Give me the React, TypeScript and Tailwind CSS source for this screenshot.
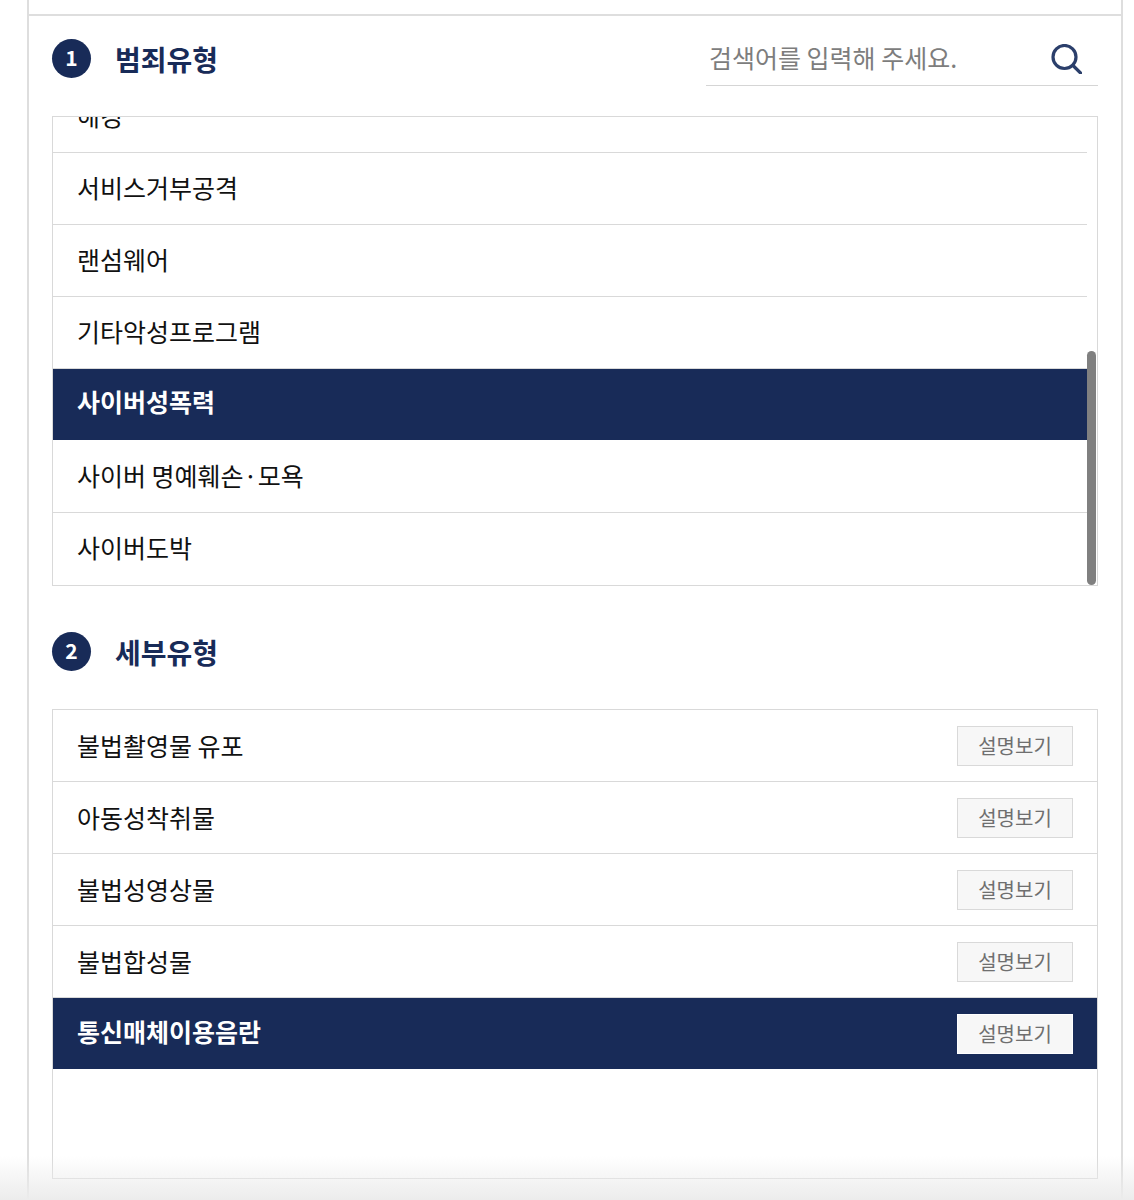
const crimeTypes = [
  { name: "해킹" },
  { name: "서비스거부공격" },
  { name: "랜섬웨어" },
  { name: "기타악성프로그램" },
  { name: "사이버성폭력", active: true },
  { name: "사이버 명예훼손·모욕" },
  { name: "사이버도박" },
];

const detailTypes = [
  { name: "불법촬영물 유포" },
  { name: "아동성착취물" },
  { name: "불법성영상물" },
  { name: "불법합성물" },
  { name: "통신매체이용음란", active: true },
];

function SectionTitle({ num, title }: { num: number; title: string }) {
  return (
    <div className="flex items-center gap-6">
      <span className="flex h-[39px] w-[39px] items-center justify-center rounded-full bg-[#182b58] pb-[3px] text-[21px] font-bold leading-none text-white">
        {num}
      </span>
      <h2 className="text-[28px] font-bold leading-none text-[#182b58]">{title}</h2>
    </div>
  );
}

export default function App() {
  return (
    <div
      className="relative h-[1200px] w-[1134px] overflow-hidden bg-white text-[25px] text-[#111]"
      style={{ fontFamily: '"Noto Sans CJK KR", "Noto Sans", sans-serif' }}
    >
      <div className="ml-[27px] h-[1200px] w-[1096px] border-x-2 border-[#dedede]">
        <div className="h-[16px] border-b-2 border-[#dedede]" />
        <div className="px-[23px]">
          {/* 범죄유형 */}
          <div className="flex h-[100px] items-start justify-between pt-[23px]">
            <SectionTitle num={1} title="범죄유형" />
            <div className="flex h-[47px] w-[392px] items-center justify-between border-b border-[#d5d5d5] pb-[8px] pl-[3px] pr-[16px]">
              <span className="text-[25px] text-[#7d7d7d]">검색어를 입력해 주세요.</span>
              <svg className="mt-[1px] h-[30px] w-[31px]" viewBox="0 0 31 30" fill="none" stroke="#2b3f6b" strokeWidth="3.2">
                <circle cx="13.5" cy="13" r="11.5" />
                <path d="M22 21.5L29.5 29" strokeLinecap="round" />
              </svg>
            </div>
          </div>

          <div className="relative h-[470px] w-[1046px] overflow-hidden border border-[#d9d9d9]">
            <div className="-mt-[36px] mr-[10px]">
              {crimeTypes.map((row) => (
                <div
                  key={row.name}
                  className={`flex h-[72px] items-center px-6 ${
                    row.active
                      ? "border-b border-white bg-[#182b58] pb-[5px] font-bold text-white"
                      : "border-b border-[#d9d9d9] pb-[2px] last:border-b-0"
                  }`}
                >
                  {row.name}
                </div>
              ))}
            </div>
            <div className="absolute bottom-0 right-[1px] top-[234px] w-[9px] rounded-full bg-[#808080]" />
          </div>

          {/* 세부유형 */}
          <div className="mb-[38px] mt-[46px] flex h-[39px] items-center">
            <SectionTitle num={2} title="세부유형" />
          </div>

          <div className="h-[470px] w-[1046px] border border-[#d9d9d9]">
            {detailTypes.map((row) => (
              <div
                key={row.name}
                className={`flex items-center justify-between px-6 ${
                  row.active
                    ? "h-[71px] bg-[#182b58] font-bold text-white"
                    : "h-[72px] border-b border-[#d9d9d9]"
                }`}
              >
                <span className={row.active ? "pb-[4px]" : ""}>{row.name}</span>
                <button
                  className={`flex h-10 w-[116px] items-center justify-center border bg-[#f7f7f7] text-[20px] font-normal text-[#6f6f6f] ${
                    row.active ? "mt-[1px] border-white" : "border-[#d9d9d9]"
                  }`}
                >
                  설명보기
                </button>
              </div>
            ))}
          </div>
        </div>
      </div>
      {/* 하단 페이드 */}
      <div className="pointer-events-none absolute inset-x-0 bottom-0 h-[44px] bg-gradient-to-b from-transparent to-[#ececec]" />
    </div>
  );
}
